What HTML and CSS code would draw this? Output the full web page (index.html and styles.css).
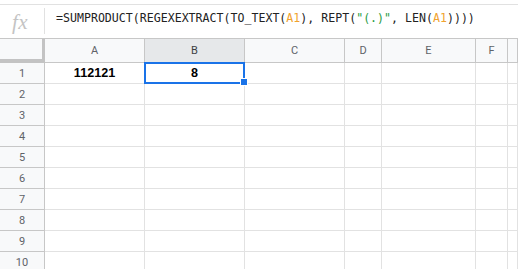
FILE: index.html
```html
<!DOCTYPE html>
<html>
<head>
<meta charset="utf-8">
<link rel="stylesheet" href="styles.css">
</head>
<body>
<div class="formula-bar">
  <div class="fx-box"><span class="fx">fx</span><span class="sep"></span></div>
  <div class="formula">=SUMPRODUCT(REGEXEXTRACT(TO_TEXT(<span class="ref">A1</span>), REPT(<span class="str">"(.)"</span>, LEN(<span class="ref">A1</span>))))</div>
</div>
<div class="grid">
  <div class="corner"></div>
  <div class="ch">A</div>
  <div class="ch ch-sel">B</div>
  <div class="ch">C</div>
  <div class="ch">D</div>
  <div class="ch">E</div>
  <div class="ch">F</div>
  <div class="ch"></div>

  <div class="rh">1</div>
  <div class="c val">112121</div>
  <div class="c val sel-cell">8<div class="selection"></div><div class="handle"></div></div>
  <div class="c"></div><div class="c"></div><div class="c"></div><div class="c"></div><div class="c"></div>

  <div class="rh">2</div><div class="c"></div><div class="c"></div><div class="c"></div><div class="c"></div><div class="c"></div><div class="c"></div><div class="c"></div>
  <div class="rh">3</div><div class="c"></div><div class="c"></div><div class="c"></div><div class="c"></div><div class="c"></div><div class="c"></div><div class="c"></div>
  <div class="rh">4</div><div class="c"></div><div class="c"></div><div class="c"></div><div class="c"></div><div class="c"></div><div class="c"></div><div class="c"></div>
  <div class="rh">5</div><div class="c"></div><div class="c"></div><div class="c"></div><div class="c"></div><div class="c"></div><div class="c"></div><div class="c"></div>
  <div class="rh">6</div><div class="c"></div><div class="c"></div><div class="c"></div><div class="c"></div><div class="c"></div><div class="c"></div><div class="c"></div>
  <div class="rh">7</div><div class="c"></div><div class="c"></div><div class="c"></div><div class="c"></div><div class="c"></div><div class="c"></div><div class="c"></div>
  <div class="rh">8</div><div class="c"></div><div class="c"></div><div class="c"></div><div class="c"></div><div class="c"></div><div class="c"></div><div class="c"></div>
  <div class="rh">9</div><div class="c"></div><div class="c"></div><div class="c"></div><div class="c"></div><div class="c"></div><div class="c"></div><div class="c"></div>
  <div class="rh">10</div><div class="c"></div><div class="c"></div><div class="c"></div><div class="c"></div><div class="c"></div><div class="c"></div><div class="c"></div>
</div>
</body>
</html>
```
FILE: styles.css
```css
html, body {
  margin: 0;
  padding: 0;
  background: #fff;
  width: 518px;
  height: 269px;
  overflow: hidden;
}

.formula-bar {
  margin-top: 4px;
  border-top: 1px solid #e1e1e1;
  height: 33px;
  display: flex;
}

.fx-box {
  width: 45px;
  height: 33px;
  display: flex;
  align-items: flex-start;
  position: relative;
}

.fx {
  font-family: "Liberation Serif", serif;
  font-style: italic;
  font-size: 21px;
  color: #c4c4c4;
  line-height: 21px;
  margin-left: 12px;
  margin-top: 7px;
  letter-spacing: 0.5px;
}

.sep {
  position: absolute;
  left: 44px;
  top: 3px;
  width: 1px;
  height: 26px;
  background: #e1e1e1;
}

.formula {
  font-family: "DejaVu Sans Mono", monospace;
  font-size: 11.6px;
  line-height: 14px;
  color: #222;
  padding-top: 6px;
  padding-left: 11px;
  white-space: nowrap;
}

.ref { color: #f0a22e; }
.str { color: #1f9a3f; }

.grid {
  display: grid;
  grid-template-columns: 45px 100px 100px 100px 37px 94px 32px 10px;
  grid-template-rows: 24px repeat(10, 21px);
  border-top: 1px solid #c7c7c7;
}

.corner {
  background: #f8f9fa;
  border-right: 3px solid #c3c3c3;
  border-bottom: 4px solid #c3c3c3;
  margin-left: 0;
}

.ch {
  background: #f8f9fa;
  border-right: 1px solid #c7c7c7;
  border-bottom: 1px solid #c7c7c7;
  font-family: Roboto, "Liberation Sans", sans-serif;
  font-size: 11px;
  color: #5f6368;
  display: flex;
  align-items: center;
  justify-content: center;
}

.ch-sel {
  background: #e6e8ea;
  color: #3c4043;
}

.rh {
  background: #f8f9fa;
  border-right: 1px solid #c7c7c7;
  border-bottom: 1px solid #c7c7c7;
  font-family: Roboto, "Liberation Sans", sans-serif;
  font-size: 11px;
  color: #5f6368;
  display: flex;
  align-items: center;
  justify-content: center;
}

.c {
  border-right: 1px solid #e2e2e2;
  border-bottom: 1px solid #e2e2e2;
}

.val {
  font-family: "Liberation Sans", Arial, sans-serif;
  font-weight: bold;
  font-size: 12.6px;
  color: #000;
  display: flex;
  align-items: center;
  justify-content: center;
}

.sel-cell {
  position: relative;
}

.selection {
  position: absolute;
  left: -1px;
  top: -1px;
  right: -1px;
  bottom: -1px;
  border: 2px solid #1a73e8;
}

.handle {
  position: absolute;
  left: 96px;
  top: 16px;
  width: 6px;
  height: 6px;
  background: #1a73e8;
  outline: 1px solid #fff;
}
```
